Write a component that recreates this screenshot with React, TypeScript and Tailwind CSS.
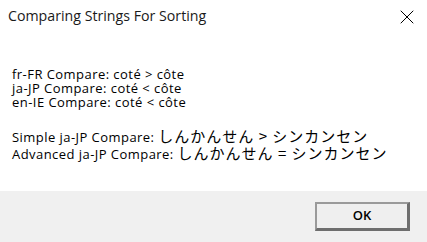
import { X } from "lucide-react";

const ui = { fontFamily: '"Open Sans", "Noto Sans", sans-serif' };
const jp = { fontFamily: '"Noto Sans CJK JP", sans-serif' };

export default function App() {
  return (
    <div className="w-[427px] h-[242px] bg-white flex flex-col text-black" style={ui}>
      <div className="h-8 flex items-center justify-between pl-2 pr-2 pt-px">
        <span className="text-[14.2px] leading-none text-[#1a1a1a]">Comparing Strings For Sorting</span>
        <X className="w-6 h-6" strokeWidth={1} />
      </div>
      <div className="flex-1 pl-3 pt-[35px] text-[13px] leading-[14px] tracking-[0.45px]">
        <div>fr-FR Compare: coté &gt; côte</div>
        <div>ja-JP Compare: coté &lt; côte</div>
        <div>en-IE Compare: coté &lt; côte</div>
        <div className="mt-[19px] leading-[15px]">
          Simple ja-JP Compare: <span className="text-[15px] leading-[15px] tracking-[1px]" style={jp}>しんかんせん &gt; シンカンセン</span>
        </div>
        <div className="leading-[15px]">
          Advanced ja-JP Compare: <span className="text-[15px] leading-[15px] tracking-[1px]" style={jp}>しんかんせん = シンカンセン</span>
        </div>
      </div>
      <div className="h-[51px] bg-[#f0f0f0] flex items-start justify-end pt-[11px] pr-[17px]">
        <button className="w-[95px] h-[29px] bg-[#efefef] border-t-2 border-l-2 border-[#9a9a9a] border-r-[3px] border-b-[3px] border-r-[#6e6e6e] border-b-[#6e6e6e] text-[13px] font-semibold text-black">
          OK
        </button>
      </div>
    </div>
  );
}
